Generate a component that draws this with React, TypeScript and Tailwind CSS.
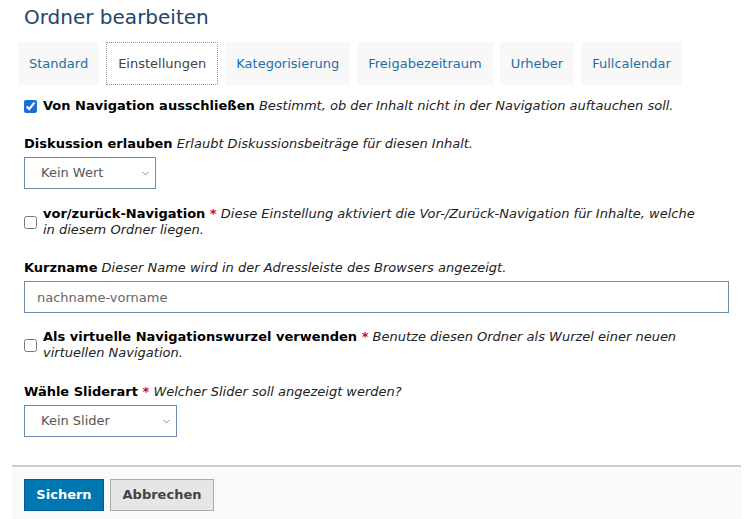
import { ChevronDown } from 'lucide-react';

const tabs = ['Standard', 'Einstellungen', 'Kategorisierung', 'Freigabezeitraum', 'Urheber', 'Fullcalendar'];

function Req() {
  return <span className="font-bold text-[#c4093a]"> *</span>;
}

function Help({ children }: { children: React.ReactNode }) {
  return <span className="italic font-normal text-[#222]"> {children}</span>;
}

function SelectBox({ value, width }: { value: string; width: string }) {
  return (
    <div className={`relative ${width}`}>
      <select
        defaultValue={value}
        className="appearance-none w-full h-[32px] border border-[#6d89ab] bg-white pl-[16px] pr-6 text-[13px] text-[#555] outline-none"
      >
        <option>{value}</option>
      </select>
      <ChevronDown className="absolute right-[5px] top-[11px] w-[11px] h-[11px] text-[#777] pointer-events-none" strokeWidth={1.75} />
    </div>
  );
}

function CheckRow({ checked, children }: { checked?: boolean; children: React.ReactNode }) {
  return (
    <div className="flex items-center gap-[6px]">
      <input
        type="checkbox"
        defaultChecked={checked}
        className="w-[13px] h-[13px] m-0 shrink-0 accent-[#1a6fd6]"
      />
      <div className="leading-[16px] max-w-[652px]">{children}</div>
    </div>
  );
}

export default function App() {
  return (
    <div className="w-[746px] h-[519px] bg-white overflow-hidden text-[13px] text-black" style={{ fontFamily: '"DejaVu Sans", Verdana, sans-serif' }}>
      <div className="pl-[24px] pr-[17px]">
        <h1 className="text-[20px] leading-[24px] pt-[5px] text-[#1e456c]">Ordner bearbeiten</h1>

        <div className="flex gap-[7px] mt-[13px] -ml-[6px]">
          {tabs.map((t) => (
            <div
              key={t}
              className={`h-[43px] px-[11px] flex items-center text-[13px] ${
                t === 'Einstellungen'
                  ? 'bg-white border border-dotted border-[#999] text-[#444]'
                  : 'bg-[#f8f8f8] text-[#1f6ea8]'
              }`}
            >
              {t}
            </div>
          ))}
        </div>

        <div className="mt-[13px]">
          <CheckRow checked>
            <span className="font-bold">Von Navigation ausschließen</span>
            <Help>Bestimmt, ob der Inhalt nicht in der Navigation auftauchen soll.</Help>
          </CheckRow>
        </div>

        <div className="mt-[22px] leading-[16px]">
          <span className="font-bold">Diskussion erlauben</span>
          <Help>Erlaubt Diskussionsbeiträge für diesen Inhalt.</Help>
        </div>
        <div className="mt-[5px]">
          <SelectBox value="Kein Wert" width="w-[132px]" />
        </div>

        <div className="mt-[17px]">
          <CheckRow>
            <span className="font-bold">vor/zurück-Navigation</span>
            <Req />
            <Help>Diese Einstellung aktiviert die Vor-/Zurück-Navigation für Inhalte, welche in diesem Ordner liegen.</Help>
          </CheckRow>
        </div>

        <div className="mt-[22px] leading-[16px]">
          <span className="font-bold">Kurzname</span>
          <Help>Dieser Name wird in der Adressleiste des Browsers angezeigt.</Help>
        </div>
        <input
          placeholder="nachname-vorname"
          className="mt-[5px] w-[705px] h-[32px] border border-[#6d89ab] px-[12px] text-[13px] placeholder:text-[#666] outline-none"
        />

        <div className="mt-[16px]">
          <CheckRow>
            <span className="font-bold">Als virtuelle Navigationswurzel verwenden</span>
            <Req />
            <Help>Benutze diesen Ordner als Wurzel einer neuen virtuellen Navigation.</Help>
          </CheckRow>
        </div>

        <div className="mt-[23px] leading-[16px]">
          <span className="font-bold">Wähle Sliderart</span>
          <Req />
          <Help>Welcher Slider soll angezeigt werden?</Help>
        </div>
        <div className="mt-[5px]">
          <SelectBox value="Kein Slider" width="w-[153px]" />
        </div>
      </div>

      <div className="mt-[28px] ml-[12px] mr-[5px] border-t-2 border-[#cfcfcf] bg-[#fafafa] pt-[12px] pb-[10px] pl-[12px] flex gap-[6px]">
        <button className="h-[32px] w-[80px] bg-[#0077b0] border border-[#005f8e] text-white font-bold text-[13px]">Sichern</button>
        <button className="h-[32px] w-[104px] bg-[#e6e6e6] border border-[#acacac] text-[#444] font-bold text-[13px]">Abbrechen</button>
      </div>
    </div>
  );
}
